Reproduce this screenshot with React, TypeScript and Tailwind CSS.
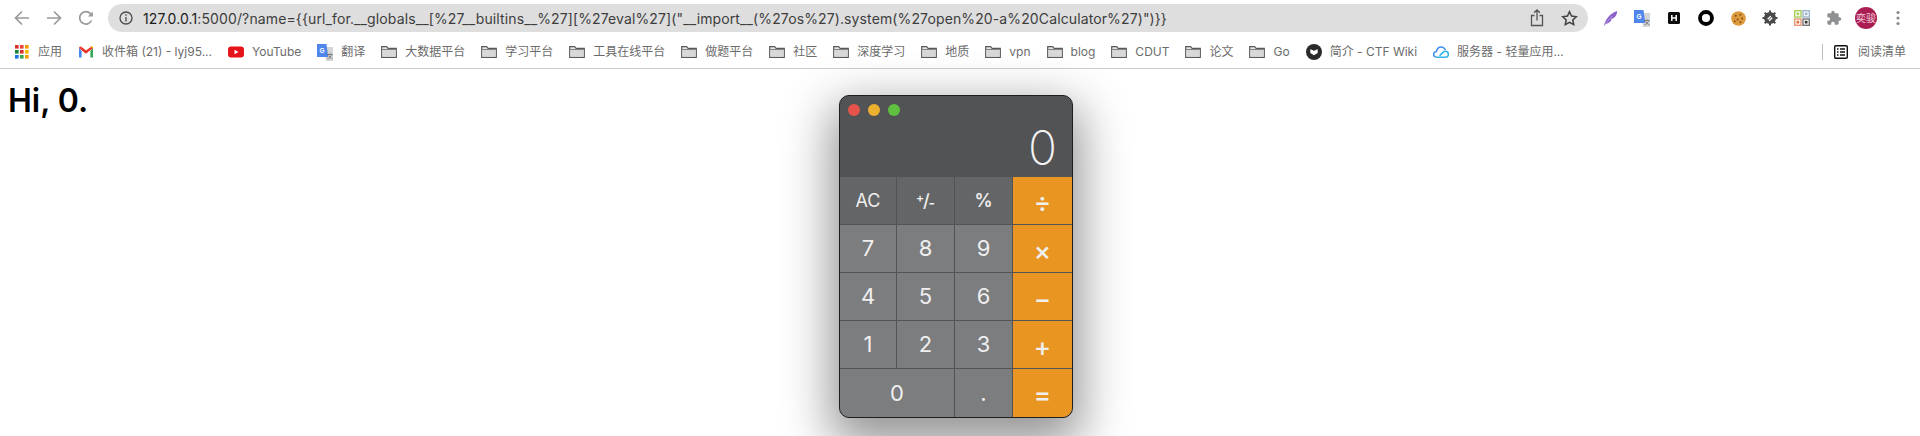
import React from "react";

const Folder = () => (
  <svg width="16" height="16" viewBox="0 0 16 16" className="shrink-0">
    <path d="M0.7 2.7h5l1.4 1.6h8.2v9h-14.6z" fill="#e4e4e4" stroke="#5a5a5a" strokeWidth="1.2" />
    <path d="M1.2 5.6h13.6" stroke="#777" strokeWidth="1" />
    <rect x="1.3" y="6" width="13.4" height="6.7" fill="#d8d8d8" />
  </svg>
);

const Apps = () => {
  const colors = ["#d93025","#e8453c","#f29900","#188038","#d93025","#f4b400","#1a73e8","#34a853","#f29900"];
  return (
    <svg width="16" height="16" viewBox="0 0 16 16" className="shrink-0">
      {colors.map((c, i) => (
        <rect key={i} x={1 + (i % 3) * 5} y={1 + Math.floor(i / 3) * 5} width="3.6" height="3.6" fill={c} />
      ))}
    </svg>
  );
};

const Gmail = () => (
  <svg width="16" height="16" viewBox="0 0 16 16" className="shrink-0">
    <path d="M1 4v9.5h2.6V7.2z" fill="#4285f4" />
    <path d="M15 4v9.5h-2.6V7.2z" fill="#34a853" />
    <path d="M1 4.2 8 9.4l1.6-1.1L3 2.6C2 2 1 2.8 1 4.2z" fill="#ea4335" />
    <path d="M15 4.2 8 9.4 3.6 6.1 3.6 3.3 8 6.6l4.4-3.3 .6-.7c1-.6 2 .2 2 1.6z" fill="#e8352a" />
    <path d="M12.4 3.3 15 4.2V3.9c0-1.4-1-2-2-1.3z" fill="#fbbc04" />
  </svg>
);

const YouTube = () => (
  <svg width="16" height="16" viewBox="0 0 16 16" className="shrink-0">
    <rect x="0" y="2.5" width="16" height="11" rx="3" fill="#e3141a" />
    <path d="M6.5 5.7v4.6L10.4 8z" fill="#fff" />
  </svg>
);

const Translate = () => (
  <svg width="16" height="17" viewBox="0 0 16 17" className="shrink-0">
    <path d="M7 3h9v14H9z" fill="#d4d4d4" />
    <path d="M0 0h9.5l1.7 13H0z" fill="#4f86ec" />
    <text x="2.6" y="8.500" fontSize="6.5" fontWeight="700" fill="#fff" fontFamily="Liberation Sans, sans-serif">G</text>
    <text x="10" y="14" fontSize="6" fill="#555" fontFamily="Noto Sans CJK SC, sans-serif">文</text>
  </svg>
);

const CtfWiki = () => (
  <svg width="16" height="16" viewBox="0 0 16 16" className="shrink-0">
    <circle cx="8" cy="8" r="8" fill="#2a2a2a" />
    <path d="M4.3 5.2 8 6.6l3.7-1.4v3.7L8 11.3 4.3 8.9z" fill="#fff" />
    <circle cx="8" cy="5" r="1.6" fill="#2a2a2a" />
  </svg>
);

const Cloud = () => (
  <svg width="16" height="16" viewBox="0 0 16 16" className="shrink-0">
    <path d="M3.6 13.2C1.7 13.2.6 11.8.6 10.4c0-1.6 1.2-2.8 2.8-2.9C4 5 5.800 3 8 3c2 0 3.600 1.200 4.300 3" fill="none" stroke="#3f8fee" strokeWidth="1.600" />
    <path d="M3.600 13.200h8.800c1.700 0 3-1.300 3-3 0-1.600-1.300-3-3-3-1.500 0-2.500 1-3.600 2.200l-2.200 2.300" fill="none" stroke="#30b4ea" strokeWidth="1.600" />
  </svg>
);

type Mark = { icon: React.ReactNode; label: string };

const marks: Mark[] = [
  { icon: <Apps />, label: "应用" },
  { icon: <Gmail />, label: "收件箱 (21) - lyj95..." },
  { icon: <YouTube />, label: "YouTube" },
  { icon: <Translate />, label: "翻译" },
  { icon: <Folder />, label: "大数据平台" },
  { icon: <Folder />, label: "学习平台" },
  { icon: <Folder />, label: "工具在线平台" },
  { icon: <Folder />, label: "做题平台" },
  { icon: <Folder />, label: "社区" },
  { icon: <Folder />, label: "深度学习" },
  { icon: <Folder />, label: "地质" },
  { icon: <Folder />, label: "vpn" },
  { icon: <Folder />, label: "blog" },
  { icon: <Folder />, label: "CDUT" },
  { icon: <Folder />, label: "论文" },
  { icon: <Folder />, label: "Go" },
  { icon: <CtfWiki />, label: "简介 - CTF Wiki" },
  { icon: <Cloud />, label: "服务器 - 轻量应用..." },
];

const Extension = ({ children }: { children: React.ReactNode }) => (
  <div className="flex h-7 w-8 items-center justify-center">{children}</div>
);

const toolbarExtensions = [
  <svg key="feather" width="15" height="17" viewBox="0 0 18 20">
    <path d="M1 19C3 11 8 4 17 1c0 5-3 8-5 9l-3 .5 1.500 1C9 14 6 16 3 16.500z" fill="#8a62c9" />
    <path d="M1 19 11 7" stroke="#c9b4e8" strokeWidth=".8" />
  </svg>,
  <Translate key="translate" />,
  <svg key="h" width="12" height="12" viewBox="0 0 12 12">
    <rect width="12" height="12" rx="1.500" fill="#0c0c0c" />
    <path d="M3.800 3v6M8.200 3v6M3.800 6h4.400" stroke="#fff" strokeWidth="1.500" />
  </svg>,
  <svg key="o" width="16" height="16" viewBox="0 0 16 16">
    <circle cx="8" cy="8" r="6" fill="none" stroke="#000" strokeWidth="3.800" />
  </svg>,
  <svg key="cookie" width="15" height="15" viewBox="0 0 16 16">
    <circle cx="8" cy="8" r="7.800" fill="#dc9a3c" />
    {[[5,5],[10,4],[12,8],[7,9],[4,11],[10,12]].map(([x, y]) => (
      <circle key={`${x}-${y}`} cx={x} cy={y} r="1" fill="#7b4e1c" />
    ))}
  </svg>,
  <svg key="virus" width="16" height="16" viewBox="0 0 16 16">
    <circle cx="8" cy="8" r="6" fill="#4a4a4a" />
    <path d="M8 .5v15M.5 8h15M2.700 2.700l10.600 10.600M13.300 2.700 2.700 13.300" stroke="#4a4a4a" strokeWidth="2" />
    <path d="M5.700 9.300 8.800 6.200M7.200 10.800l3-3" stroke="#fff" strokeWidth="1.300" />
  </svg>,
  <svg key="qr" width="16" height="16" viewBox="0 0 16 16">
    <rect x=".7" y=".7" width="6.300" height="6.300" fill="#fff" stroke="#a8cf5c" strokeWidth="1.400" />
    <rect x="2.500" y="2.500" width="2.700" height="2.700" fill="#a8cf5c" />
    <rect x="9" y=".7" width="6.300" height="6.300" fill="#fff" stroke="#9db4cc" strokeWidth="1.400" />
    <rect x="10.800" y="2.500" width="2.700" height="2.700" fill="#9db4cc" />
    <rect x=".7" y="9" width="6.300" height="6.300" fill="#fff" stroke="#e89a78" strokeWidth="1.400" />
    <rect x="2.500" y="10.800" width="2.700" height="2.700" fill="#e8703a" />
    <rect x="9" y="9" width="6.300" height="6.300" fill="#fff" stroke="#777" strokeWidth="1.400" />
    <rect x="10.800" y="10.800" width="2.700" height="2.700" fill="#333" />
  </svg>,
  <svg key="puzzle" width="16" height="16" viewBox="0 0 24 24">
    <path d="M20.500 11H19V7a2 2 0 0 0-2-2h-4V3.500a2.500 2.500 0 0 0-5 0V5H4a2 2 0 0 0-2 2v3.800h1.500a2.700 2.700 0 0 1 0 5.400H2V20a2 2 0 0 0 2 2h3.800v-1.500a2.700 2.700 0 0 1 5.400 0V22H17a2 2 0 0 0 2-2v-4h1.500a2.500 2.500 0 0 0 0-5z" fill="#8f9092" />
  </svg>,
  <div key="avatar" className="flex h-[22px] w-[22px] items-center justify-center rounded-full bg-[#a91d52] text-[10px] leading-none text-[#f0c7d6]">奕骏</div>,
  <svg key="dots" width="4" height="16" viewBox="0 0 4 16">
    <circle cx="2" cy="2.500" r="1.600" fill="#8a8a8a" />
    <circle cx="2" cy="8" r="1.600" fill="#8a8a8a" />
    <circle cx="2" cy="13.500" r="1.600" fill="#8a8a8a" />
  </svg>,
];

const Key = ({ label, tone, className = "" }: { label: React.ReactNode; tone: "top" | "num" | "op"; className?: string }) => {
  const toneClass =
    tone === "top"
      ? "bg-[#646567] text-[18px]"
      : tone === "num"
      ? "bg-[#7c7d7f] text-[22px]"
      : "bg-[#e89522] pt-[3px] text-[26px] font-medium";
  return (
    <div className={`flex items-center justify-center text-[#efefef] ${toneClass} ${className}`}>{label}</div>
  );
};

const PlusMinus = (
  <span className="flex items-center font-semibold leading-none">
    <span className="mb-[5px] -mr-px text-[12px]">+</span>
    <span className="text-[18px] font-medium">/</span>
    <span className="mt-[5px] -ml-px text-[14px]">-</span>
  </span>
);

const Calculator = () => (
  <div className="absolute left-[839px] top-[95px] flex h-[323px] w-[234px] flex-col overflow-hidden rounded-[10px] border border-[#1e1e1e] bg-[#525355] font-['Inter',sans-serif] shadow-[0_18px_48px_8px_rgba(0,0,0,0.42)]">
    <div className="flex h-[81px] shrink-0 flex-col px-[8px] pt-[8px]">
      <div className="flex gap-2">
        <span className="h-3 w-3 rounded-full bg-[#e5534b]" />
        <span className="h-3 w-3 rounded-full bg-[#edb02f]" />
        <span className="h-3 w-3 rounded-full bg-[#5fc13f]" />
      </div>
      <div className="mt-[4px] pr-[7px] text-right text-[48px] font-extralight leading-[56px] text-[#f2f2f2]">0</div>
    </div>
    <div className="grid flex-1 grid-cols-[56px_57px_57px_59px] grid-rows-[47px_47px_47px_47px_48px] gap-px">
      <Key label="AC" tone="top" />
      <Key label={PlusMinus} tone="top" />
      <Key label="%" tone="top" className="font-semibold" />
      <Key label="÷" tone="op" />
      <Key label="7" tone="num" />
      <Key label="8" tone="num" />
      <Key label="9" tone="num" />
      <Key label="×" tone="op" />
      <Key label="4" tone="num" />
      <Key label="5" tone="num" />
      <Key label="6" tone="num" />
      <Key label="−" tone="op" />
      <Key label="1" tone="num" />
      <Key label="2" tone="num" />
      <Key label="3" tone="num" />
      <Key label="+" tone="op" />
      <Key label="0" tone="num" className="col-span-2" />
      <Key label="." tone="num" />
      <Key label="=" tone="op" />
    </div>
  </div>
);

export default function App() {
  return (
    <div className="relative h-[436px] w-[1920px] overflow-hidden bg-white font-['Inter','Noto_Sans_CJK_SC',sans-serif]">
      <div className="flex h-[36px] items-start pt-1 pl-[6px]">
        <div className="flex h-7 w-8 items-center justify-center">
          <svg width="16" height="16" viewBox="0 0 16 16" fill="none" stroke="#9a9a9a" strokeWidth="1.700">
            <path d="M15 8H1.800M8 1.500 1.500 8 8 14.500" />
          </svg>
        </div>
        <div className="flex h-7 w-8 items-center justify-center">
          <svg width="16" height="16" viewBox="0 0 16 16" fill="none" stroke="#9a9a9a" strokeWidth="1.700">
            <path d="M1 8h13.200M8 1.500 14.500 8 8 14.500" />
          </svg>
        </div>
        <div className="flex h-7 w-8 items-center justify-center">
          <svg width="16" height="16" viewBox="0 0 16 16" fill="none" stroke="#9a9a9a" strokeWidth="1.700">
            <path d="M13.500 10.500A6.200 6.200 0 1 1 12.400 3.600L14.500 5.700" />
            <path d="M14.800 1.500v5h-5" fill="#9a9a9a" stroke="none" />
          </svg>
        </div>
        <div className="ml-[6px] flex h-7 w-[1480px] items-center rounded-full bg-[#dedede] pl-[11px] pr-[10px]">
          <svg width="14" height="14" viewBox="0 0 14 14" fill="none" className="shrink-0" stroke="#4a4a4a" strokeWidth="1.300">
            <circle cx="7" cy="7" r="6" />
            <path d="M7 6v4.500" />
            <path d="M7 3.300v1.500" />
          </svg>
          <div className="ml-[10px] flex-1 whitespace-nowrap text-[14px] tracking-[0.12px] text-[#3d3d3d]">
            <span className="text-[#1c1c1c]">127.0.0.1</span>
            :5000/?name={"{{"}url_for.__globals__[%27__builtins__%27][%27eval%27]("__import__(%27os%27).system(%27open%20-a%20Calculator%27)"){"}}"}
          </div>
          <div className="flex w-[48px] items-center justify-between">
            <svg width="14" height="18" viewBox="0 0 14 18" fill="none" stroke="#555" strokeWidth="1.300">
              <path d="M4.500 6.500H1.500v10h11v-10H9.500M7 11.500V1.200M4 3.800 7 1l3 2.800" />
            </svg>
            <svg width="17" height="17" viewBox="0 0 24 24" fill="none" stroke="#444" strokeWidth="2.200">
              <path d="M12 2.500l2.900 6.100 6.600.9-4.800 4.600 1.200 6.600L12 17.500l-5.900 3.200 1.200-6.600L2.500 9.500l6.600-.9z" />
            </svg>
          </div>
        </div>
        <div className="ml-[6px] flex">
          {toolbarExtensions.map((ext, i) => (
            <Extension key={i}>{ext}</Extension>
          ))}
        </div>
      </div>
      <div className="box-content flex h-[32px] items-center border-b border-[#cdcdcd] pl-[14px] text-[12px] text-[#6b6b6b]">
        <div className="flex items-center gap-4">
          {marks.map((m) => (
            <div key={m.label} className="flex items-center gap-2 whitespace-nowrap">
              {m.icon}
              <span>{m.label}</span>
            </div>
          ))}
        </div>
        <div className="ml-auto flex items-center pr-[14px]">
          <div className="mr-[11px] h-4 w-px bg-[#bdbdbd]" />
          <svg width="14" height="14" viewBox="0 0 14 14" fill="none" stroke="#111" strokeWidth="1.400" className="mr-[10px]">
            <rect x=".7" y=".7" width="12.600" height="12.600" rx="1" />
            <path d="M3 4h1.500M3 7h1.500M3 10h1.500M6 4h5M6 7h5M6 10h5" />
          </svg>
          <span>阅读清单</span>
        </div>
      </div>
      <h1 className="pl-2 pt-[13px] text-[32px] font-semibold leading-[37px] text-black">Hi, 0.</h1>
      <Calculator />
    </div>
  );
}
